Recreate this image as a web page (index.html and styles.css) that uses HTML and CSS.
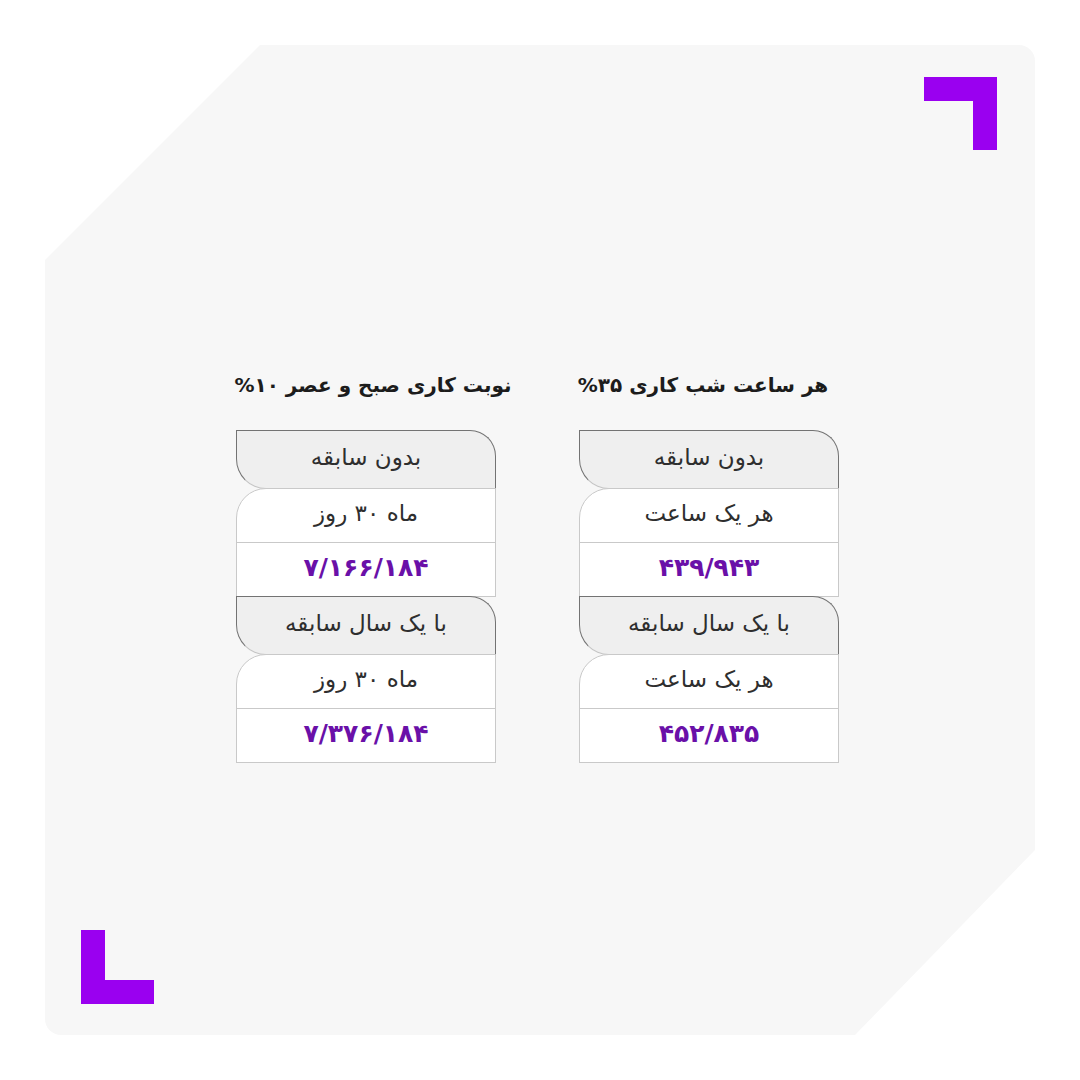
FILE: index.html
```html
<!DOCTYPE html>
<html lang="fa" dir="rtl">
<head>
<meta charset="utf-8">
<title>نوبت کاری</title>
<link rel="stylesheet" href="styles.css">
</head>
<body>
<div class="card">
  <svg class="mark mark-tr" width="73" height="73" viewBox="0 0 73 73"><path d="M0 0H73V73H49V24H0Z"/></svg>
  <svg class="mark mark-bl" width="73" height="74" viewBox="0 0 73 74"><path d="M0 0H24V50H73V74H0Z"/></svg>
  <div class="columns">
    <section class="col">
      <h2 class="title title-night">هر ساعت شب کاری ۳۵%</h2>
      <div class="table">
        <div class="row head">بدون سابقه</div>
        <div class="row sub">هر یک ساعت</div>
        <div class="row val">۴۳۹/۹۴۳</div>
        <div class="row head">با یک سال سابقه</div>
        <div class="row sub">هر یک ساعت</div>
        <div class="row val">۴۵۲/۸۳۵</div>
      </div>
    </section>
    <section class="col">
      <h2 class="title title-day">نوبت کاری صبح و عصر ۱۰%</h2>
      <div class="table">
        <div class="row head">بدون سابقه</div>
        <div class="row sub">ماه ۳۰ روز</div>
        <div class="row val">۷/۱۶۶/۱۸۴</div>
        <div class="row head">با یک سال سابقه</div>
        <div class="row sub">ماه ۳۰ روز</div>
        <div class="row val">۷/۳۷۶/۱۸۴</div>
      </div>
    </section>
  </div>
</div>
</body>
</html>
```
FILE: styles.css
```css
html, body {
  margin: 0;
  padding: 0;
  background: #ffffff;
}
body {
  font-family: "DejaVu Sans", "Noto Sans", sans-serif;
  color: #2b2b2b;
}
.card {
  position: relative;
  box-sizing: border-box;
  margin: 45px;
  width: 990px;
  height: 990px;
  background: #f7f7f7;
  border-radius: 16px;
  clip-path: polygon(215px 0, 100% 0, 100% 805px, 810px 100%, 0 100%, 0 215px);
  padding-top: 325px;
  padding-right: 5px;
}
.mark {
  position: absolute;
  fill: #9a00f0;
}
.mark-tr {
  top: 32px;
  right: 38px;
}
.mark-bl {
  bottom: 31px;
  left: 36px;
}
.columns {
  display: flex;
  justify-content: center;
  gap: 83px;
}
.col {
  width: 260px;
  display: flex;
  flex-direction: column;
}
.title {
  height: 30px;
  line-height: 30px;
  font-size: 20px;
  font-weight: bold;
  color: #1c1c1c;
  text-align: center;
  white-space: nowrap;
}
.title-night {
  margin: 0 -14px 30px -26px;
}
.title-day {
  margin: 0 -27px 30px -13px;
}
.table {
  display: flex;
  flex-direction: column;
}
.row {
  box-sizing: border-box;
  display: flex;
  align-items: center;
  justify-content: center;
  background: #ffffff;
  border: 1px solid #c9c9c9;
  font-size: 23px;
  color: #2e2e2e;
  margin-top: -1px;
  padding-bottom: 6px;
}
.row:first-child {
  margin-top: 0;
}
.head {
  height: 59px;
  background: #efefef;
  border-color: #737373 #737373 #c4c4c4 #737373;
  border-top-right-radius: 26px;
  border-bottom-left-radius: 30px;
}
.sub {
  height: 55px;
  border-top-left-radius: 30px;
}
.val {
  height: 55px;
  font-size: 25px;
  font-weight: bold;
  color: #6a10a8;
  padding-bottom: 4px;
}
```
